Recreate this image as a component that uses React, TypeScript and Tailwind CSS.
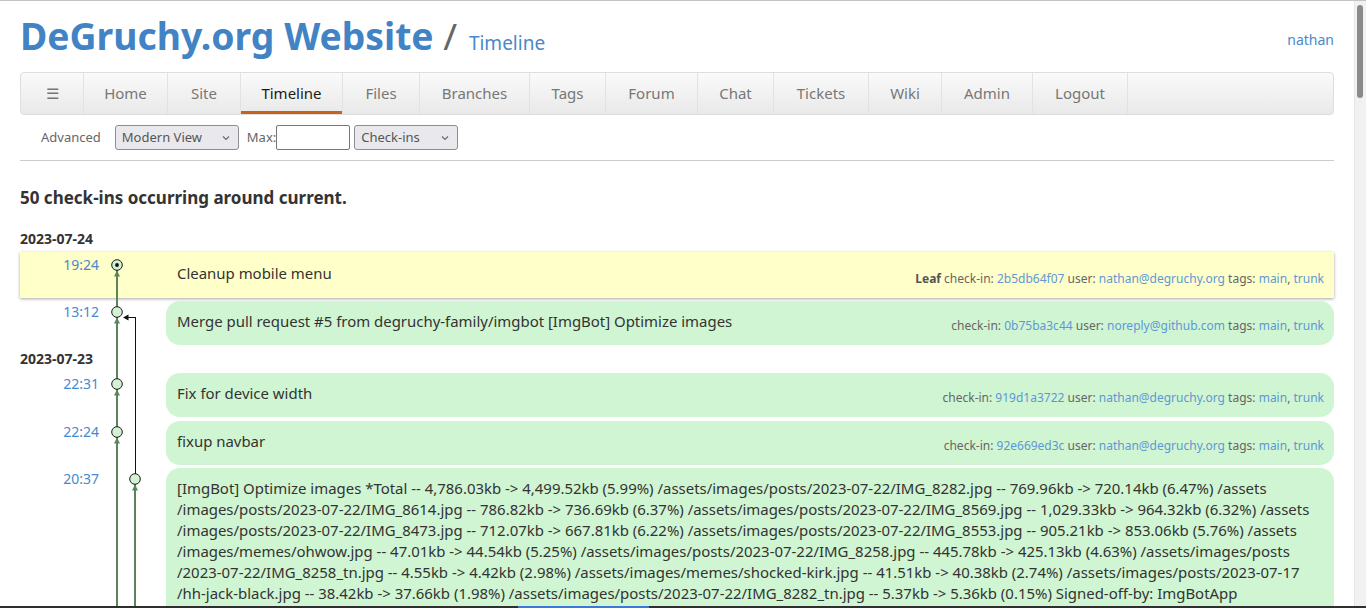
import React from "react";

const navItems: { label: string; w: number; active?: boolean }[] = [
  { label: "☰", w: 64 },
  { label: "Home", w: 84 },
  { label: "Site", w: 73 },
  { label: "Timeline", w: 102, active: true },
  { label: "Files", w: 77 },
  { label: "Branches", w: 110 },
  { label: "Tags", w: 76 },
  { label: "Forum", w: 92 },
  { label: "Chat", w: 76 },
  { label: "Tickets", w: 95 },
  { label: "Wiki", w: 73 },
  { label: "Admin", w: 91 },
  { label: "Logout", w: 95 },
];

function Chevron() {
  return (
    <svg width="10" height="10" viewBox="0 0 10 10" className="shrink-0">
      <path d="M2 3.5 L5 6.5 L8 3.5" fill="none" stroke="#6b6b6b" strokeWidth="1.2" />
    </svg>
  );
}

function Meta({ leaf, hash, user }: { leaf?: boolean; hash: string; user: string }) {
  return (
    <div className="whitespace-nowrap text-[12px] leading-[17px] text-[#666]">
      {leaf && <b className="font-bold text-[#555]">Leaf </b>}
      check-in: <span className="text-[#5f97d6]">{hash}</span> user:{" "}
      <span className="text-[#5f97d6]">{user}</span> tags:{" "}
      <span className="text-[#5f97d6]">main</span>, <span className="text-[#5f97d6]">trunk</span>
    </div>
  );
}

function Time({ t, top }: { t: string; top: string }) {
  return (
    <div className={`w-[79px] shrink-0 text-right text-[14px] leading-[20px] text-[#4a88cc] ${top}`}>{t}</div>
  );
}

function Bubble({ time, comment, hash, user }: { time: string; comment: string; hash: string; user: string }) {
  return (
    <div className="flex">
      <Time t={time} top="pt-[1px]" />
      <div className="w-[67px] shrink-0" />
      <div className="flex h-[44px] flex-1 items-start justify-between rounded-[14px] bg-[#d0f5d2] pl-[11px] pr-[10px] pt-[10px]">
        <div className="text-[14.95px] leading-[21px] text-[#333]">{comment}</div>
        <div className="mt-[6px]">
          <Meta hash={hash} user={user} />
        </div>
      </div>
    </div>
  );
}

const longLines = [
  "[ImgBot] Optimize images *Total -- 4,786.03kb -> 4,499.52kb (5.99%) /assets/images/posts/2023-07-22/IMG_8282.jpg -- 769.96kb -> 720.14kb (6.47%) /assets",
  "/images/posts/2023-07-22/IMG_8614.jpg -- 786.82kb -> 736.69kb (6.37%) /assets/images/posts/2023-07-22/IMG_8569.jpg -- 1,029.33kb -> 964.32kb (6.32%) /assets",
  "/images/posts/2023-07-22/IMG_8473.jpg -- 712.07kb -> 667.81kb (6.22%) /assets/images/posts/2023-07-22/IMG_8553.jpg -- 905.21kb -> 853.06kb (5.76%) /assets",
  "/images/memes/ohwow.jpg -- 47.01kb -> 44.54kb (5.25%) /assets/images/posts/2023-07-22/IMG_8258.jpg -- 445.78kb -> 425.13kb (4.63%) /assets/images/posts",
  "/2023-07-22/IMG_8258_tn.jpg -- 4.55kb -> 4.42kb (2.98%) /assets/images/memes/shocked-kirk.jpg -- 41.51kb -> 40.38kb (2.74%) /assets/images/posts/2023-07-17",
  "/hh-jack-black.jpg -- 38.42kb -> 37.66kb (1.98%) /assets/images/posts/2023-07-22/IMG_8282_tn.jpg -- 5.37kb -> 5.36kb (0.15%) Signed-off-by: ImgBotApp",
];

function Graph() {
  const G = "#5b845b";
  const up = (x: number, y: number) => `M${x} ${y} L${x - 3} ${y + 6} L${x + 3} ${y + 6} Z`;
  const nodes = [36, 83, 155, 203];
  return (
    <svg className="pointer-events-none absolute left-0 top-0" width="140" height="420" viewBox="0 0 140 420">
      <line x1="97" y1="41" x2="97" y2="78" stroke={G} strokeWidth="2" />
      <line x1="97" y1="88" x2="97" y2="150" stroke={G} strokeWidth="2" />
      <line x1="97" y1="160" x2="97" y2="198" stroke={G} strokeWidth="2" />
      <line x1="97" y1="208" x2="97" y2="420" stroke={G} strokeWidth="2" />
      {nodes.map((n) => (
        <path key={n} d={up(97, n + 5.5)} fill={G} />
      ))}
      <line x1="115.5" y1="88" x2="115.5" y2="245" stroke="#111" strokeWidth="1" />
      <line x1="108" y1="88.5" x2="115.5" y2="88.5" stroke="#111" strokeWidth="1" />
      <path d="M103 88.5 L108.5 85.5 L108.5 91.5 Z" fill="#111" />
      <line x1="115" y1="255" x2="115" y2="420" stroke={G} strokeWidth="2" />
      <path d={up(115, 255.5)} fill={G} />
      {nodes.map((n) => (
        <circle key={"c" + n} cx="97" cy={n} r="5.3" fill="#d3f2d3" stroke="#1a1a1a" strokeWidth="1" />
      ))}
      <circle cx="97" cy="36" r="1.9" fill="#111" />
      <circle cx="115" cy="250" r="5.3" fill="#d3f2d3" stroke="#1a1a1a" strokeWidth="1" />
    </svg>
  );
}

export default function App() {
  return (
    <div
      className="flex h-[608px] flex-col overflow-hidden border-t border-[#c4c4c4] bg-white"
      style={{ fontFamily: '"Noto Sans", "Open Sans", sans-serif' }}
    >
      <div className="flex min-h-0 flex-1">
        <div className="min-w-0 flex-1 overflow-hidden px-[20px]">
          <div className="flex items-start justify-between pt-[12px]">
            <h1 className="whitespace-pre text-[37.3px] leading-[46px] text-[#4183c4]">
              <span className="font-bold">DeGruchy.org Website</span>
              <span className="font-normal text-[#666]"> / </span>
              <span className="ml-[2px] text-[19px] font-normal text-[#4a88cc]">Timeline</span>
            </h1>
            <div className="mt-[17px] text-[14px] leading-[20px] text-[#4a88cc]">nathan</div>
          </div>

          <div className="mt-[6px] flex h-[43px] rounded-[4px] border border-[#dedede] bg-linear-to-b from-[#fafafa] to-[#e9e9e9]">
            {navItems.map((it, i) => (
              <div
                key={it.label}
                style={{ width: i === 0 ? it.w - 1 : it.w }}
                className={`flex shrink-0 items-center justify-center border-r border-[#e2e2e2] text-[15px] ${
                  it.active ? "text-[#1a1a1a] shadow-[inset_0_-3px_0_#c8621a]" : "text-[#777]"
                }`}
              >
                {it.label}
              </div>
            ))}
          </div>

          <div className="mt-[10px] flex h-[25px] items-center text-[13px] text-[#666]">
            <span className="pl-[21px]">Advanced</span>
            <div className="ml-[14px] flex h-[25px] w-[124px] items-center justify-between rounded-[3px] border border-[#8e8e8e] bg-[#e9e9ed] pl-[6px] pr-[7px] text-[#555]">
              <span>Modern View</span>
              <Chevron />
            </div>
            <span className="ml-[8px]">Max:</span>
            <div className="h-[25px] w-[74px] rounded-[2px] border border-[#767676] bg-white" />
            <div className="ml-[4px] flex h-[25px] w-[104px] items-center justify-between rounded-[3px] border border-[#8e8e8e] bg-[#e9e9ed] pl-[6px] pr-[7px] text-[#555]">
              <span>Check-ins</span>
              <Chevron />
            </div>
          </div>

          <div className="mt-[10px] border-t border-[#cccccc]" />

          <h2 className="mt-[25px] text-[17px] font-bold leading-[24px] text-[#333]">
            50 check-ins occurring around current.
          </h2>

          <div className="relative mt-[19px]">
            <div className="text-[14px] font-bold leading-[20px] text-[#333]">2023-07-24</div>

            <div className="mt-[3px] flex h-[46px] bg-[#ffffc9] shadow-[0_1px_3px_rgba(0,0,0,0.35)]">
              <Time t="19:24" top="pt-[3px]" />
              <div className="w-[67px] shrink-0" />
              <div className="flex flex-1 items-start justify-between pl-[11px] pr-[10px] pt-[11px]">
                <div className="text-[14.95px] leading-[21px] text-[#333]">Cleanup mobile menu</div>
                <div className="mt-[7px]">
                  <Meta leaf hash="2b5db64f07" user="nathan@degruchy.org" />
                </div>
              </div>
            </div>

            <div className="mt-[3px]">
              <Bubble
                time="13:12"
                comment="Merge pull request #5 from degruchy-family/imgbot [ImgBot] Optimize images"
                hash="0b75ba3c44"
                user="noreply@github.com"
              />
            </div>

            <div className="mt-[4px] text-[14px] font-bold leading-[20px] text-[#333]">2023-07-23</div>

            <div className="mt-[4px]">
              <Bubble time="22:31" comment="Fix for device width" hash="919d1a3722" user="nathan@degruchy.org" />
            </div>
            <div className="mt-[4px]">
              <Bubble time="22:24" comment="fixup navbar" hash="92e669ed3c" user="nathan@degruchy.org" />
            </div>

            <div className="mt-[3px] flex">
              <Time t="20:37" top="pt-[1px]" />
              <div className="w-[67px] shrink-0" />
              <div className="flex-1 rounded-[14px] bg-[#d0f5d2] pb-[12px] pl-[11px] pr-[10px] pt-[10px] text-[14.95px] leading-[21px] text-[#333]">
                {longLines.map((l) => (
                  <div key={l} className="whitespace-nowrap">
                    {l}
                  </div>
                ))}
                <div className="mt-[4px] flex justify-end">
                  <Meta hash="5e2a6c1b0d" user="noreply@github.com" />
                </div>
              </div>
            </div>

            <Graph />
          </div>
        </div>

        <div className="w-[12px] shrink-0 border-l border-[#e6e6e6] bg-[#f1f1f1]">
          <div className="ml-[2px] mt-[4px] h-[93px] w-[6px] rounded-full bg-[#8a8a8a]" />
        </div>
      </div>
      <div className="flex h-[2px] shrink-0 bg-[#2f2f2f]">
        <div className="w-[518px]" />
        <div className="w-[131px] bg-[#3b78d8]" />
      </div>
    </div>
  );
}
